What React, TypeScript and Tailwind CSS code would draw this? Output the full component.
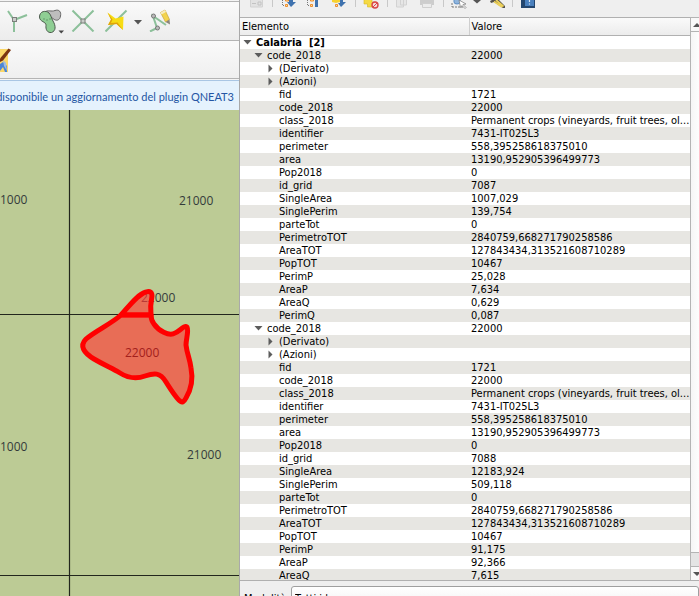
import React from "react";

type Row = { name: string; value?: string; level: number; arrow?: "down" | "right"; bold?: boolean };

const feature = (grid: string, area: string, perim: string, perimP: string, areaP: string, areaQ: string): Row[] => [
  { name: "code_2018", value: "22000", level: 1, arrow: "down" },
  { name: "(Derivato)", level: 2, arrow: "right" },
  { name: "(Azioni)", level: 2, arrow: "right" },
  { name: "fid", value: "1721", level: 2 },
  { name: "code_2018", value: "22000", level: 2 },
  { name: "class_2018", value: "Permanent crops (vineyards, fruit trees, ol...", level: 2 },
  { name: "identifier", value: "7431-IT025L3", level: 2 },
  { name: "perimeter", value: "558,395258618375010", level: 2 },
  { name: "area", value: "13190,952905396499773", level: 2 },
  { name: "Pop2018", value: "0", level: 2 },
  { name: "id_grid", value: grid, level: 2 },
  { name: "SingleArea", value: area, level: 2 },
  { name: "SinglePerim", value: perim, level: 2 },
  { name: "parteTot", value: "0", level: 2 },
  { name: "PerimetroTOT", value: "2840759,668271790258586", level: 2 },
  { name: "AreaTOT", value: "127843434,313521608710289", level: 2 },
  { name: "PopTOT", value: "10467", level: 2 },
  { name: "PerimP", value: perimP, level: 2 },
  { name: "AreaP", value: areaP, level: 2 },
  { name: "AreaQ", value: areaQ, level: 2 },
];

const rows: Row[] = [
  { name: "Calabria  [2]", level: 0, arrow: "down", bold: true },
  ...feature("7087", "1007,029", "139,754", "25,028", "7,634", "0,629"),
  { name: "PerimQ", value: "0,087", level: 2 },
  ...feature("7088", "12183,924", "509,118", "91,175", "92,366", "7,615"),
];

const indent = ["pl-[3px]", "pl-[14px]", "pl-[26px]"];

function Arrow({ dir }: { dir?: "down" | "right" }) {
  return (
    <svg className="h-[9px] w-[9px] shrink-0" viewBox="0 0 9 9" fill="#5c5c5c" aria-hidden="true">
      {dir === "down" && <path d="M0.5 2h8L4.5 6.5z" />}
      {dir === "right" && <path d="M2.5 0.5v8L6.5 4.5z" />}
    </svg>
  );
}

function Tool({ label, className, children }: { label: string; className: string; children: React.ReactNode }) {
  return (
    <button type="button" aria-label={label} className={`block shrink-0 ${className}`}>
      {children}
    </button>
  );
}

function Separator({ className }: { className: string }) {
  return <span className={`h-[7px] w-px shrink-0 bg-[#c8c8c8] ${className}`} />;
}

function DigitizingToolbar() {
  return (
    <div className="flex h-10 shrink-0 items-start border-t border-b border-[#b4b4b4] bg-linear-to-b from-[#fafafa] to-[#ececec] pt-[6px] pl-[6px]">
      <Tool label="Tracciamento" className="h-6 w-6">
        <svg className="h-6 w-6" viewBox="0 0 24 24" fill="none">
          <path d="M2 3l6 9v12M8 12l13-5" stroke="#8cc09a" strokeWidth="2" />
          <rect x="6.500" y="9.500" width="4" height="4" fill="#c9cdc9" stroke="#7c7f7c" />
        </svg>
      </Tool>
      <Tool label="Sposta elemento" className="ml-2 h-7 w-7">
        <svg className="h-7 w-7" viewBox="0 0 28 28">
          <path d="M7 4C10 1.500 13 4 17 2.500C21 1 23.500 4 22.500 8C22 12.500 18 13.500 15 10.500C12 8 8 8 7 4z" fill="#bdbdbd" stroke="#666" />
          <path d="M1.500 9C1.500 3 8 2 11 5C13.500 7.500 13 10 15 13C18 18 18 23 13.500 24.500C9 25 7.500 21 8 17.500C8.500 13.500 1.500 14 1.500 9z" fill="#8fce94" stroke="#4d5a4e" />
          <path d="M6 10v2M9 11v2M12 10v2" stroke="#5c8d63" strokeWidth=".8" />
          <path d="M20.500 22.500h5.500l-2.750 3z" fill="#444" />
        </svg>
      </Tool>
      <Tool label="Intersezione" className="ml-[5px] h-6 w-6">
        <svg className="h-6 w-6" viewBox="0 0 24 24" fill="none">
          <path d="M1.500 2.500l21 21M22.500 2.500l-21 21" stroke="#8cc09a" strokeWidth="2" />
          <rect x="10" y="11" width="4" height="4" fill="#c9cdc9" stroke="#7c7f7c" />
        </svg>
      </Tool>
      <Tool label="Autointersezione" className="ml-[10px] h-6 w-6">
        <svg className="h-6 w-6" viewBox="0 0 24 24">
          <path d="M0.500 23.500L21.500 2.500" stroke="#8cc09a" strokeWidth="2" />
          <path d="M2.500 4.500L10.500 10.500L18.500 8.500L18 22L11.500 16L3 17L6 11.500z" fill="#f7dc13" />
          <path d="M2.500 4.500L6 11.500L3 17L11.500 16L18 22L12.500 14.500L6 15L7.500 11.500z" fill="#e0a30c" />
        </svg>
      </Tool>
      <Tool label="Opzioni di aggancio" className="mt-[11px] ml-[2px] h-2 w-3">
        <svg className="h-2 w-3" viewBox="0 0 12 8">
          <path d="M3 1h8L7 5.500z" fill="#555" />
        </svg>
      </Tool>
      <Tool label="Modifica vertici" className="ml-[5px] h-6 w-6">
        <svg className="h-6 w-6" viewBox="0 0 24 24" fill="none">
          <path d="M2 23.500l7-3.500L5 8l13 9" stroke="#8cc09a" strokeWidth="2" />
          <circle cx="5.500" cy="8" r="2" fill="#bbb" stroke="#777" />
          <circle cx="9.500" cy="20" r="2" fill="#bbb" stroke="#777" />
          <path d="M12.500 4.500L17 2l4.500 9.500l-4 2.500z" fill="#f3d34c" stroke="#c9a53c" strokeWidth=".7" />
          <path d="M12.500 4.500L17 2l1 2l-4.500 2.500z" fill="#f7ecc0" />
          <path d="M17.500 14l4-2.500l.5 5z" fill="#8c867a" />
        </svg>
      </Tool>
    </div>
  );
}

function PluginToolbar() {
  return (
    <div className="flex h-[38px] shrink-0 items-start border-b border-[#b4b4b4] bg-linear-to-b from-[#fafafa] to-[#efefef] pt-[7px]">
      <Tool label="Stile" className="h-6 w-3">
        <svg className="h-6 w-3" viewBox="0 0 12 24">
          <path d="M0 1h8v23H0z" fill="#fbd768" />
          <path d="M0 16l3-2 4 4v6H5l-2-5-3 4z" fill="#4b86d6" />
          <path d="M3 12l3 3 1 8-3-5z" fill="#9fbce0" />
          <path d="M0 10.500L8.500 0.500l2.500 1.500L3 12.500 0 14z" fill="#7a3410" />
        </svg>
      </Tool>
    </div>
  );
}

function MapCanvas() {
  return (
    <svg
      className="min-h-0 w-full flex-1 bg-[#bccb95] font-['Open_Sans','Noto_Sans',sans-serif] text-[12px]"
      role="img"
      aria-label="Mappa"
    >
      <g stroke="#22261d" strokeWidth="1.200">
        <path d="M69.500 0v1200M0 204.500h240M0 465.500h240" />
      </g>
      <g fill="#343b3b">
        <text x="0" y="94">1000</text>
        <text x="179" y="95">21000</text>
        <text x="141" y="192">22000</text>
        <text x="0" y="341">1000</text>
        <text x="187" y="349">21000</text>
      </g>
      <g transform="translate(0 -110)" fill="#ff3a34" fillOpacity=".65" stroke="#ff0000" strokeWidth="5" strokeLinejoin="round">
        <path d="M121 315C129 306 138 294 146 292Q152 290 152 296Q150 306 151 315z" />
        <path d="M121 315C111 324 95 331 86 339C79 346 84 353 94 359C106 366 112 368 120 373C128 378 137 379 145 376C154 373 160 372 166 382C171 390 176 398 180 401Q183 404 186 398C192 388 193 378 191 368C190 359 187 354 186 345C186 339 189 331 187 327C184 325 180 331 175 333C169 337 158 330 154 324Q151 320 151 315z" />
      </g>
      <text x="125" y="247" fill="#a3201c">22000</text>
    </svg>
  );
}

function PanelToolbar() {
  return (
    <div className="flex h-[17px] shrink-0 items-start overflow-hidden bg-[#efefef]">
      <Tool label="Modulo" className="ml-[9px] h-4 w-4">
        <svg className="h-4 w-4" viewBox="0 0 16 16">
          <path d="M1.500 -2h12v9h-12z" fill="#e2e2e2" stroke="#d2d2d2" />
          <path d="M3 3.500h4M9 2h3v3h-3z" stroke="#c2c2c2" fill="none" />
        </svg>
      </Tool>
      <Separator className="ml-[7px]" />
      <Tool label="Espandi albero" className="ml-[8px] h-4 w-4">
        <svg className="h-4 w-4" viewBox="0 0 16 16">
          <path d="M1.500 0v5.500h2" fill="none" stroke="#777" strokeDasharray="1 1" />
          <path d="M4.500 -1h3v2h-3zM4.500 4.500h2v2h-2z" fill="#fbd9a8" stroke="#ee8f2a" />
          <path d="M8 -1h4v3h3l-5 5-4-5h2z" fill="#3f72ae" />
        </svg>
      </Tool>
      <Tool label="Comprimi albero" className="ml-[9px] h-4 w-4">
        <svg className="h-4 w-4" viewBox="0 0 16 16">
          <path d="M1.500 0v5.500h2" fill="none" stroke="#777" strokeDasharray="1 1" />
          <path d="M4.500 -1h3v2h-3zM4.500 4.500h2v2h-2z" fill="#fbd9a8" stroke="#ee8f2a" />
          <path d="M9 -1h3v8h-3z" fill="#3f72ae" />
        </svg>
      </Tool>
      <Tool label="Espandi nuovi risultati" className="ml-[9px] h-4 w-4">
        <svg className="h-4 w-4" viewBox="0 0 16 16">
          <path d="M1 -1h8v3L5 3 1 2z" fill="#f8d22f" />
          <path d="M4.500 4.500h2v2h-2z" fill="#fbd9a8" stroke="#ee8f2a" />
          <path d="M9 -1h3v3h3l-5 5-3-4h2z" fill="#3f72ae" />
        </svg>
      </Tool>
      <Separator className="ml-[8px]" />
      <Tool label="Pulisci risultati" className="ml-[7px] h-4 w-4">
        <svg className="h-4 w-4" viewBox="0 0 16 16">
          <path d="M1 -1h8v3h4v5H4.500V4H1z" fill="#f5da45" stroke="#d8b925" strokeWidth=".6" />
          <circle cx="12" cy="5" r="3" fill="#f6dada" stroke="#d94848" strokeWidth="1.400" />
          <path d="M10 7l4-4" stroke="#d94848" />
        </svg>
      </Tool>
      <Separator className="ml-[8px]" />
      <Tool label="Copia" className="ml-[7px] h-4 w-4">
        <svg className="h-4 w-4" viewBox="0 0 16 16">
          <path d="M1.500 -1h7v8h-7zM5.500 -1h6v6h-6z" fill="#e6e6e6" stroke="#d2d2d2" />
        </svg>
      </Tool>
      <Tool label="Stampa" className="ml-[8px] h-4 w-4">
        <svg className="h-4 w-4" viewBox="0 0 16 16">
          <path d="M1 0h14v5H1z" fill="#cdcdcd" />
          <path d="M3.500 3.500h9v4h-9z" fill="#ececec" stroke="#cfcfcf" />
        </svg>
      </Tool>
      <Separator className="ml-[8px]" />
      <Tool label="Informazione elementi" className="ml-[7px] h-4 w-4">
        <svg className="h-4 w-4" viewBox="0 0 16 16">
          <path d="M1 7h11M1 3v4" stroke="#777" strokeDasharray="2 1" />
          <path d="M3 -1h6v3a3 2 0 0 1-6 0z" fill="#8fb4dc" stroke="#5f8fc4" />
          <path d="M8 0l7 4-3 .5 3 3-1 1-3-3-1.500 2z" fill="#fff" stroke="#777" strokeWidth=".7" />
        </svg>
      </Tool>
      <Tool label="Altre modalità" className="ml-[5px] h-2 w-[10px]">
        <svg className="h-2 w-[10px]" viewBox="0 0 10 8">
          <path d="M1 0h8L5 3.500z" fill="#555" />
        </svg>
      </Tool>
      <Tool label="Impostazioni" className="ml-[8px] h-4 w-4">
        <svg className="h-4 w-4" viewBox="0 0 16 16">
          <path d="M4 -1l3-1 8 8v2h-2L4 2 1 3 0 1z" fill="#55524a" />
          <path d="M6 0l7.500 6.500M4 1.500l8 5.500" stroke="#ecd05a" strokeWidth="1.800" />
        </svg>
      </Tool>
      <Separator className="ml-[6px]" />
      <Tool label="Guida" className="ml-[8px] h-4 w-4">
        <svg className="h-4 w-4" viewBox="0 0 16 16">
          <path d="M0 -1h14v9H0z" fill="#24466e" />
          <path d="M4 -1h9v7H4z" fill="#4a80bd" />
          <path d="M8.500 0v2M8.500 3.500v1" stroke="#dfe9f5" strokeWidth="1.200" />
        </svg>
      </Tool>
    </div>
  );
}

function ResultsTree() {
  return (
    <div className="min-w-0 flex-1 overflow-hidden bg-white">
      <table className="w-full table-fixed">
        <thead>
          <tr className="h-[18px] bg-linear-to-b from-[#fafafa] to-[#ebebeb]">
            <th className="w-[229px] border-t border-r border-b border-[#b0b0b0] border-r-[#cfcfcf] p-0 pl-[2px] text-left font-normal">Elemento</th>
            <th className="border-t border-b border-[#b0b0b0] p-0 pl-[2px] text-left font-normal">Valore</th>
          </tr>
        </thead>
        <tbody>
          {rows.map((r, i) => (
            <tr key={i} className="h-[13px] odd:bg-white even:bg-[#e7e6e2]">
              <td className={`p-0 ${r.bold ? "font-bold" : ""}`}>
                <span className={`flex items-center gap-1 whitespace-pre ${indent[r.level]}`}>
                  <Arrow dir={r.arrow} />
                  {r.name}
                </span>
              </td>
              <td className="p-0 pl-[2px] whitespace-nowrap">{r.value}</td>
            </tr>
          ))}
        </tbody>
      </table>
    </div>
  );
}

function ScrollBar() {
  return (
    <div className="flex w-[9px] shrink-0 flex-col overflow-hidden border-t border-l border-[#b4b4b4] bg-[#e4e4e4]">
      <button type="button" aria-label="Scorri su" className="h-[14px] shrink-0 border-b border-[#b4b4b4] bg-[#f8f8f8] pl-[2px]">
        <svg className="h-2 w-2" viewBox="0 0 8 8">
          <path d="M0 6l4-4 4 4z" fill="#555" />
        </svg>
      </button>
      <div className="flex-1 border-b border-[#b4b4b4] bg-linear-to-r from-[#f6f6f6] to-[#fdfdfd]" />
      <button type="button" aria-label="Scorri giù" className="mt-[13px] h-[14px] shrink-0 border-t border-[#b4b4b4] bg-[#f8f8f8] pl-[2px]">
        <svg className="h-2 w-2" viewBox="0 0 8 8">
          <path d="M0 2h8L4 6z" fill="#555" />
        </svg>
      </button>
    </div>
  );
}

export default function App() {
  return (
    <div className="flex h-screen overflow-hidden bg-[#efefef] font-['DejaVu_Sans_Condensed','DejaVu_Sans',sans-serif] text-[11px] leading-[13px] text-black">
      <section className="flex w-[240px] shrink-0 flex-col border-r border-[#a9a9a9] bg-[#f4f4f4] pt-px">
        <DigitizingToolbar />
        <PluginToolbar />
        <div className="mt-px flex h-[30px] shrink-0 items-center justify-end overflow-hidden border-t border-[#a9c6e4] bg-[#e5f2fd] pt-px pr-[5px] font-['Lato','Liberation_Sans',sans-serif] whitespace-nowrap text-[#2456a4]">
          È disponibile un aggiornamento del plugin QNEAT3
        </div>
        <MapCanvas />
      </section>
      <main className="flex min-w-0 flex-1 flex-col">
        <PanelToolbar />
        <div className="flex min-h-0 flex-1 border-b border-[#b0b0b0]">
          <ResultsTree />
          <ScrollBar />
        </div>
        <div className="flex h-[15px] shrink-0 items-start pt-[5px] pl-1">
          <label htmlFor="mode" className="w-[47px] shrink-0 pt-[6px]">
            Modalità
          </label>
          <select
            id="mode"
            className="h-6 min-w-0 flex-1 appearance-none rounded-[3px] border border-[#9f9f9f] bg-linear-to-b from-white to-[#f0f0f0] pl-[3px]"
          >
            <option>Tutti i layer</option>
          </select>
        </div>
      </main>
    </div>
  );
}
